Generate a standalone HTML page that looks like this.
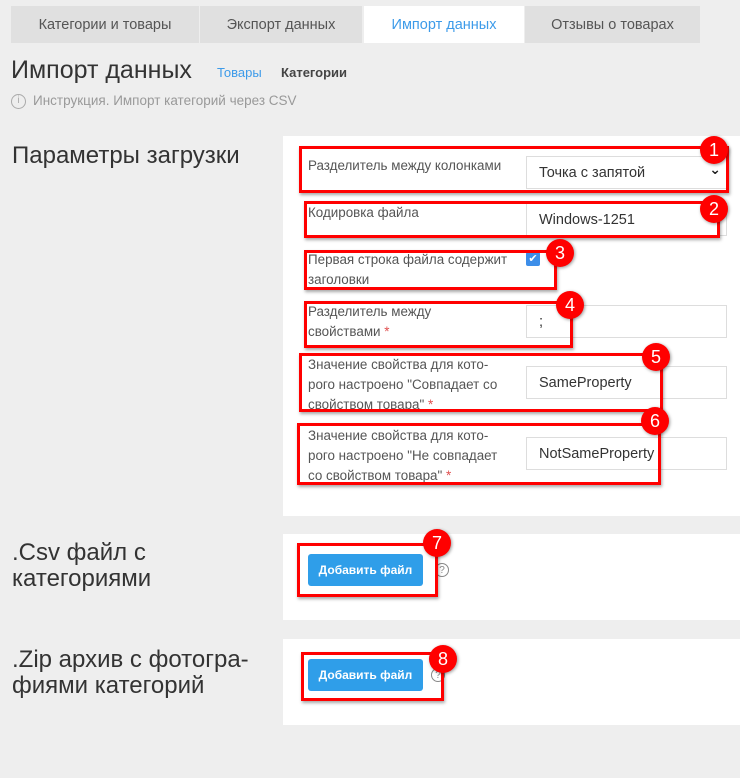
<!DOCTYPE html>
<html><head><meta charset="utf-8"><style>
*{margin:0;padding:0;box-sizing:border-box}
body{width:740px;height:778px;background:#eeeeee;font-family:"Liberation Sans","DejaVu Sans",sans-serif;position:relative;overflow:hidden;color:#333}
.a{position:absolute}
.tab{position:absolute;top:6px;height:37px;background:#e0e0e0;color:#555;font-size:14.5px;display:flex;align-items:center;justify-content:center}
.panel{position:absolute;left:283px;right:0;background:#fff}
.h{position:absolute;left:12px;font-size:24px;color:#333;line-height:26px}
.lbl{position:absolute;left:308px;font-size:13.4px;color:#555;line-height:20px}
.inp{position:absolute;left:526px;width:201px;height:33px;border:1px solid #ddd;background:#fff;font-size:14.5px;color:#333;padding-left:12px;display:flex;align-items:center}
.req{color:#e05050}
.rb{position:absolute;border:3px solid #f00;box-shadow:1px 2px 3px rgba(0,0,0,.35)}
.bd{position:absolute;width:28px;height:28px;border-radius:50%;background:#f00;color:#fff;font-size:18px;display:flex;align-items:center;justify-content:center;box-shadow:1px 1px 3px rgba(0,0,0,.4)}
.btn{position:absolute;left:308px;width:115px;height:32px;background:#2f9ee9;border-radius:3px;color:#fff;font-size:12px;font-weight:bold;display:flex;align-items:center;justify-content:center}
.q{position:absolute;width:14px;height:14px;border:1.5px solid #888;border-radius:50%;font-size:10px;color:#888;display:flex;align-items:center;justify-content:center}
</style></head><body>
<div class="tab" style="left:11px;width:188px">Категории и товары</div>
<div class="tab" style="left:200px;width:162px">Экспорт данных</div>
<div class="tab" style="left:364px;width:160px;background:#fff;color:#3d9be9">Импорт данных</div>
<div class="tab" style="left:525px;width:175px">Отзывы о товарах</div>

<div class="a" style="left:11px;top:56px;font-size:25px;color:#333">Импорт данных</div>
<div class="a" style="left:217px;top:65px;font-size:13px;color:#3d9be9">Товары</div>
<div class="a" style="left:281px;top:65px;font-size:13px;color:#444;font-weight:bold">Категории</div>
<div class="a" style="left:11px;top:94px;width:15px;height:15px;border:1.5px solid #aaa;border-radius:50%;font-size:10px;color:#aaa;text-align:center;line-height:12px">i</div>
<div class="a" style="left:33px;top:93px;font-size:13.5px;color:#999">Инструкция. Импорт категорий через CSV</div>

<div class="panel" style="top:136px;height:380px"></div>
<div class="panel" style="top:534px;height:86px"></div>
<div class="panel" style="top:639px;height:86px"></div>

<div class="h" style="top:143px">Параметры загрузки</div>
<div class="h" style="top:540px">.Csv файл с<br>категориями</div>
<div class="h" style="top:647px">.Zip архив с фотогра-<br>фиями категорий</div>

<div class="lbl" style="top:156px">Разделитель между колонками</div>
<div class="inp" style="top:156px">Точка с запятой<span style="position:absolute;right:5px;top:4px;font-size:14px;color:#222;font-weight:bold">&#8964;</span></div>
<div class="lbl" style="top:203px">Кодировка файла</div>
<div class="inp" style="top:203px">Windows-1251</div>
<div class="lbl" style="top:250px">Первая строка файла содержит<br>заголовки</div>
<div class="a" style="left:526px;top:252px;width:14px;height:14px;background:#3d8ee9;border-radius:2px;color:#fff;font-size:11px;line-height:14px;text-align:center">✔</div>
<div class="lbl" style="top:302px">Разделитель между<br>свойствами <span class="req">*</span></div>
<div class="inp" style="top:305px">;</div>
<div class="lbl" style="top:355px">Значение свойства для кото-<br>рого настроено "Совпадает со<br>свойством товара" <span class="req">*</span></div>
<div class="inp" style="top:366px">SameProperty</div>
<div class="lbl" style="top:426px">Значение свойства для кото-<br>рого настроено "Не совпадает<br>со свойством товара" <span class="req">*</span></div>
<div class="inp" style="top:437px">NotSameProperty</div>

<div class="btn" style="top:554px">Добавить файл</div>
<div class="q" style="left:435px;top:563px">?</div>
<div class="btn" style="top:659px">Добавить файл</div>
<div class="q" style="left:431px;top:668px">?</div>

<div class="rb" style="left:299px;top:146px;width:430px;height:47px"></div>
<div class="rb" style="left:304px;top:201px;width:416px;height:37px"></div>
<div class="rb" style="left:304px;top:250px;width:253px;height:40px"></div>
<div class="rb" style="left:304px;top:301px;width:269px;height:47px"></div>
<div class="rb" style="left:299px;top:353px;width:364px;height:59px"></div>
<div class="rb" style="left:297px;top:423px;width:364px;height:62px"></div>
<div class="rb" style="left:297px;top:543px;width:141px;height:54px"></div>
<div class="rb" style="left:301px;top:652px;width:143px;height:49px"></div>

<div class="bd" style="left:700px;top:136px">1</div>
<div class="bd" style="left:700px;top:195px">2</div>
<div class="bd" style="left:546px;top:239px">3</div>
<div class="bd" style="left:556px;top:291px">4</div>
<div class="bd" style="left:642px;top:343px">5</div>
<div class="bd" style="left:641px;top:407px">6</div>
<div class="bd" style="left:423px;top:529px">7</div>
<div class="bd" style="left:429px;top:645px">8</div>
</body></html>
